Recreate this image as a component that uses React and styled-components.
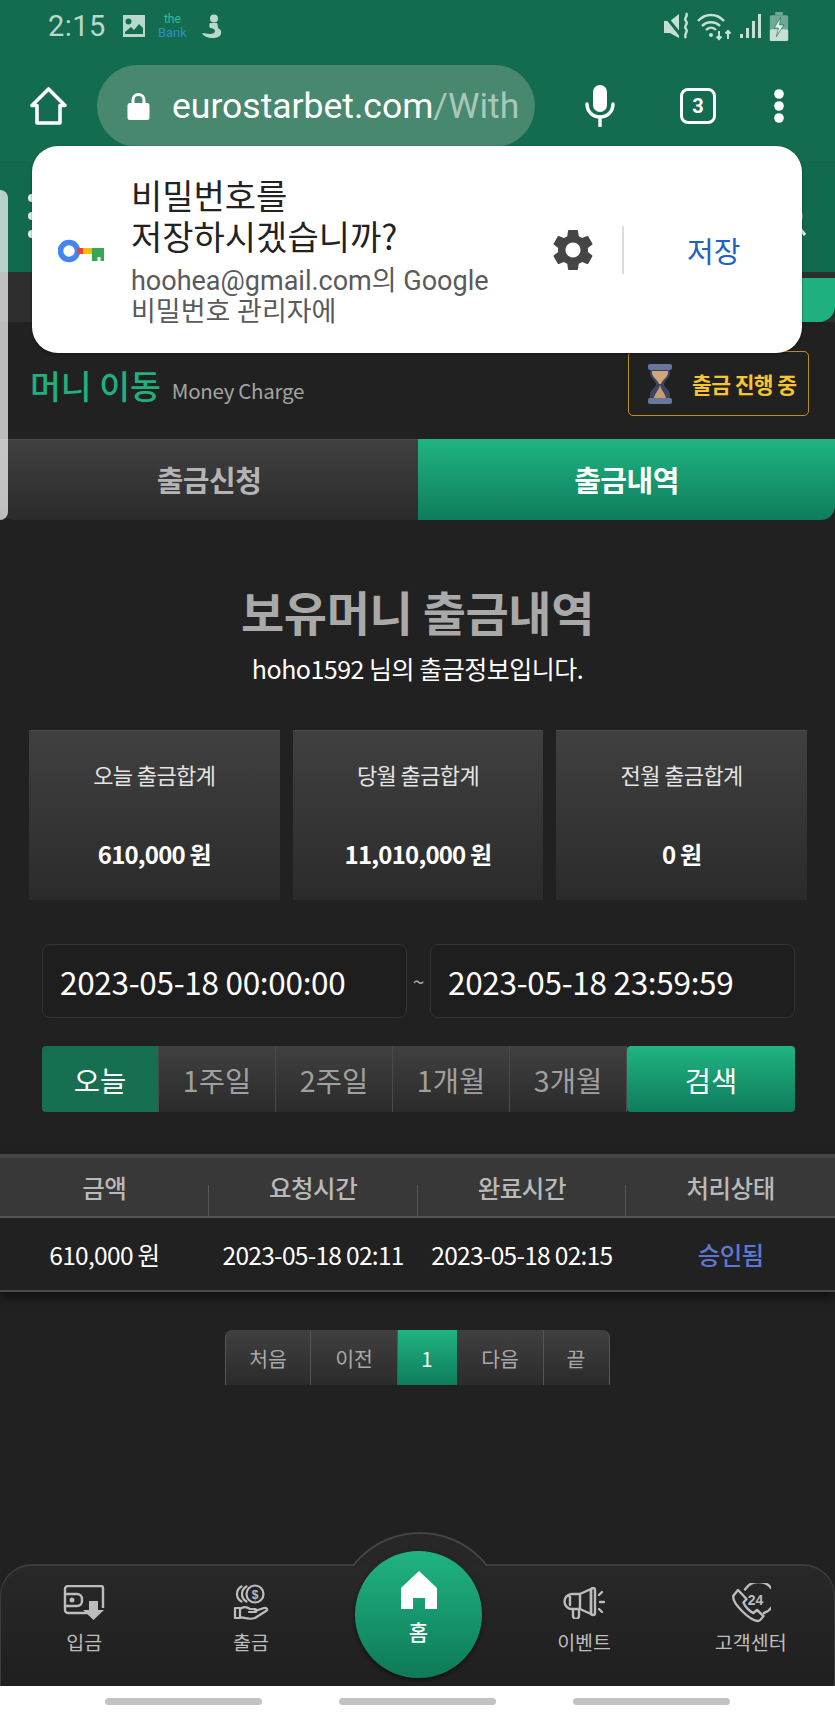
import React from "react";
import styled, { createGlobalStyle } from "styled-components";

const Global = createGlobalStyle`
  html, body { margin: 0; padding: 0; background: #212121; }
  * { box-sizing: border-box; }
`;

const KR = `"Noto Sans CJK KR", "Noto Sans", sans-serif`;
const UI = `Roboto, "Noto Sans CJK KR", sans-serif`;
const greenGrad = `linear-gradient(180deg, #20b482 0%, #0f7c5c 100%)`;
const grayGrad = `linear-gradient(180deg, #404040 0%, #2b2b2b 100%)`;

const Phone = styled.div`
  position: relative;
  width: 835px;
  height: 1717px;
  overflow: hidden;
  background: #212121;
  font-family: ${KR};
  display: flex;
  flex-direction: column;
`;

const StatusBar = styled.div`
  height: 52px;
  background: #146c50;
  padding: 0 46px 0 48px;
  display: flex;
  align-items: center;
  color: #b9d8cc;
  font-family: ${UI};
`;
const Time = styled.span`
  font-size: 29px;
  letter-spacing: 0.5px;
  margin-right: 16px;
`;
const BankMark = styled.span`
  display: flex;
  flex-direction: column;
  align-items: center;
  margin: 0 14px 0 12px;
  font-size: 13px;
  line-height: 14px;
  color: #2a8fc0;
`;
const BankThe = styled.span`
  color: #25c0a5;
  font-size: 12px;
`;
const StatusRight = styled.div`
  margin-left: auto;
  display: flex;
  align-items: center;
  gap: 7px;
`;

const Toolbar = styled.div`
  height: 111px;
  background: #146c50;
  padding: 13px 0 0 30px;
  display: flex;
  align-items: flex-start;
  border-bottom: 1px solid #126047;
`;
const HomeBtn = styled.div`
  width: 67px;
  padding-top: 22px;
`;
const UrlPill = styled.div`
  width: 438px;
  height: 82px;
  border-radius: 41px;
  background: #47886f;
  padding-left: 30px;
  display: flex;
  align-items: center;
  gap: 22px;
  font-family: ${UI};
  font-size: 35.5px;
  color: #fff;
  white-space: nowrap;
  overflow: hidden;
`;
const UrlDim = styled.span`
  color: #a6c8ba;
`;
const ToolIcons = styled.div`
  margin-left: 50px;
  display: flex;
  align-items: center;
  height: 82px;
`;
const TabCount = styled.div`
  width: 36px;
  height: 36px;
  margin: 0 57px 0 65px;
  border: 3.5px solid #fff;
  border-radius: 8px;
  color: #fff;
  font: 700 20px ${UI};
  display: flex;
  align-items: center;
  justify-content: center;
`;

const SiteHeader = styled.div`
  height: 109px;
  background: #126a4e;
  position: relative;
  padding: 31px 0 0 28px;
  display: flex;
  justify-content: space-between;
`;
const BurgerDot = styled.div`
  width: 8px;
  display: flex;
  flex-direction: column;
  gap: 10px;
  & > i {
    display: block;
    width: 8px;
    height: 8px;
    border-radius: 50%;
    background: #e8f0ec;
  }
`;
const SearchWrap = styled.div`
  margin-top: 8px;
  padding-right: 28px;
`;

const NoticeBand = styled.div`
  height: 50px;
  background: #2e2e2e;
  display: flex;
  justify-content: flex-end;
  padding-top: 6px;
`;
const NoticeTab = styled.div`
  width: 200px;
  height: 44px;
  background: #1fb07f;
  border-bottom-right-radius: 16px;
`;

const TitleRow = styled.div`
  height: 117px;
  padding: 29px 26px 0 30px;
  display: flex;
  justify-content: space-between;
  align-items: flex-start;
`;
const TitleGroup = styled.div`
  display: flex;
  align-items: baseline;
  gap: 11px;
  padding-top: 11px;
`;
const TitleMain = styled.span`
  font-size: 33.5px;
  font-weight: 500;
  line-height: 46px;
  color: #20b07f;
`;
const TitleSub = styled.span`
  font-size: 20.5px;
  color: #a4a4a4;
  letter-spacing: -0.3px;
`;
const ProgressBadge = styled.div`
  width: 181px;
  height: 65px;
  border: 1px solid #b98f22;
  border-radius: 5px;
  display: flex;
  align-items: center;
  padding-left: 17px;
  gap: 18px;
  color: #f6c52f;
  font-size: 21.5px;
  font-weight: 700;
  letter-spacing: -0.6px;
  white-space: nowrap;
`;

const Tabs = styled.div`
  height: 81px;
  display: grid;
  grid-template-columns: 418px 417px;
`;
const Tab = styled.div`
  display: flex;
  align-items: center;
  justify-content: center;
  font-size: 29px;
  font-weight: 700;
  letter-spacing: -0.5px;
  padding-bottom: 2px;
  color: ${(p) => (p.$active ? "#fff" : "#b4b4b4")};
  background: ${(p) => (p.$active ? greenGrad : grayGrad)};
  border-top: 1px solid ${(p) => (p.$active ? "#22b584" : "#4c4c4c")};
  border-bottom-right-radius: ${(p) => (p.$active ? "14px" : "0")};
  border-bottom-left-radius: ${(p) => (p.$active ? "0" : "14px")};
`;

const Heading = styled.h1`
  margin: 57px 0 0;
  height: 68px;
  line-height: 68px;
  text-align: center;
  font-size: 47px;
  font-weight: 700;
  color: #a9a9a9;
  letter-spacing: -0.4px;
`;
const SubHeading = styled.p`
  margin: 6px 0 0;
  height: 34px;
  line-height: 34px;
  text-align: center;
  font-size: 25px;
  color: #fff;
  letter-spacing: -0.5px;
`;

const Cards = styled.div`
  margin: 45px 28px 0 29px;
  display: grid;
  grid-template-columns: repeat(3, 1fr);
  gap: 13px;
`;
const Card = styled.div`
  height: 170px;
  background: ${grayGrad};
  border-top: 1px solid #4a4a4a;
  display: flex;
  flex-direction: column;
  align-items: center;
  padding-top: 27px;
`;
const CardLabel = styled.div`
  font-size: 22px;
  line-height: 32px;
  color: #e4e4e4;
  letter-spacing: -0.6px;
`;
const CardValue = styled.div`
  margin-top: 46px;
  font-size: 24px;
  line-height: 36px;
  font-weight: 700;
  color: #fff;
  letter-spacing: -0.8px;
`;

const DateRow = styled.div`
  margin: 44px 40px 0 42px;
  display: grid;
  grid-template-columns: 365px 1fr 365px;
  align-items: center;
`;
const DateInput = styled.div`
  height: 74px;
  border: 1px solid #333;
  border-radius: 8px;
  background: #1e1e1e;
  padding-left: 17px;
  display: flex;
  align-items: center;
  font-size: 31.5px;
  color: #fff;
  letter-spacing: -0.3px;
`;
const Tilde = styled.span`
  text-align: center;
  color: #aaa;
  font-size: 21px;
`;

const RangeRow = styled.div`
  margin: 28px 40px 0 42px;
  height: 66px;
  display: grid;
  grid-template-columns: repeat(5, 117px) 1fr;
`;
const RangeBtn = styled.div`
  display: flex;
  align-items: center;
  justify-content: center;
  font-size: 28.5px;
  color: ${(p) => (p.$active ? "#fff" : "#a0a0a0")};
  background: ${(p) => (p.$active ? "#156f50" : grayGrad)};
  border-right: 1px solid #4a4a4a;
  border-radius: ${(p) => (p.$active ? "4px 0 0 4px" : "0")};
`;
const SearchBtn = styled.div`
  display: flex;
  align-items: center;
  justify-content: center;
  font-size: 28.5px;
  color: #fff;
  background: ${greenGrad};
  border-radius: 4px;
`;

const TableWrap = styled.div`
  margin-top: 42px;
  box-shadow: 0 5px 10px rgba(0, 0, 0, 0.55);
  border-bottom: 2px solid #4a4a4a;
`;
const HeadRow = styled.div`
  height: 64px;
  display: grid;
  grid-template-columns: repeat(4, 1fr);
  background: #383838;
  border-top: 4px solid #474747;
  border-bottom: 2px solid #555;
`;
const HeadCell = styled.div`
  position: relative;
  text-align: center;
  font-size: 24.5px;
  font-weight: 500;
  line-height: 60px;
  color: #b9b9b9;
  letter-spacing: -0.5px;
  &:not(:last-child)::after {
    content: "";
    position: absolute;
    right: 0;
    bottom: 0;
    width: 1px;
    height: 33px;
    background: #575757;
  }
`;
const BodyRow = styled.div`
  height: 72px;
  display: grid;
  grid-template-columns: repeat(4, 1fr);
  align-items: center;
`;
const BodyCell = styled.div`
  text-align: center;
  font-size: 24.5px;
  font-weight: ${(p) => (p.$status ? 500 : 400)};
  color: ${(p) => (p.$status ? "#5e78d0" : "#fff")};
  letter-spacing: -0.7px;
  white-space: nowrap;
`;

const Pager = styled.div`
  margin: 38px auto 0;
  width: 385px;
  height: 55px;
  display: flex;
  border-radius: 8px 8px 0 0;
  overflow: hidden;
  background: ${grayGrad};
  border-left: 1px solid #555;
  border-right: 1px solid #555;
`;
const PageItem = styled.div`
  width: ${(p) => p.$w}px;
  display: flex;
  align-items: center;
  justify-content: center;
  font-size: 20.5px;
  color: ${(p) => (p.$active ? "#fff" : "#a8a8a8")};
  background: ${(p) => (p.$active ? greenGrad : "transparent")};
  border-right: 1px solid ${(p) => (p.$last || p.$active ? "transparent" : "#555")};
`;

const NavBar = styled.div`
  position: absolute;
  left: 0;
  right: 0;
  bottom: 31px;
  height: 122px;
  display: grid;
  grid-template-columns: repeat(5, 1fr);
  background: linear-gradient(180deg, #282828 0%, #1f1f1f 100%);
  border-top: 2px solid #3c3c3c;
  border-left: 1px solid #3c3c3c;
  border-right: 1px solid #3c3c3c;
  border-radius: 32px 32px 0 0;
`;
const Dome = styled.div`
  position: absolute;
  top: -34px;
  left: 333px;
  width: 168px;
  height: 34px;
  overflow: hidden;
  &::before {
    content: "";
    display: block;
    width: 168px;
    height: 168px;
    border-radius: 50%;
    border: 2px solid #444;
    background: #272727;
  }
`;
const NavItem = styled.div`
  display: flex;
  flex-direction: column;
  align-items: center;
  padding-top: 16px;
  color: #bdbdbd;
  font-size: 19.5px;
`;
const NavIconBox = styled.div`
  height: 42px;
  display: flex;
  align-items: center;
  justify-content: center;
`;
const NavLabel = styled.div`
  margin-top: 4px;
  line-height: 28px;
`;
const HomeCircle = styled.div`
  position: absolute;
  top: -15px;
  left: 354px;
  width: 127px;
  height: 127px;
  border-radius: 50%;
  background: linear-gradient(180deg, #20b482 0%, #0e7a58 100%);
  box-shadow: 0 2px 4px rgba(0, 0, 0, 0.5);
  display: flex;
  flex-direction: column;
  align-items: center;
  padding-top: 20px;
  color: #fff;
  font-size: 21px;
  font-weight: 500;
`;
const HomeLabel = styled.div`
  margin-top: 7px;
  line-height: 30px;
`;

const SystemBar = styled.div`
  position: absolute;
  left: 0;
  right: 0;
  bottom: 0;
  height: 31px;
  background: #fff;
  display: flex;
  justify-content: center;
  gap: 77px;
  padding-top: 12px;
`;
const SystemPill = styled.div`
  width: 157px;
  height: 7px;
  border-radius: 4px;
  background: #c2c2c2;
`;

const Drawer = styled.div`
  position: absolute;
  left: 0;
  top: 190px;
  width: 8px;
  height: 330px;
  background: rgba(255, 255, 255, 0.7);
  border-radius: 0 8px 8px 0;
`;

const Dialog = styled.div`
  position: absolute;
  left: 32px;
  top: 146px;
  width: 770px;
  height: 207px;
  background: #fff;
  border-radius: 26px;
  box-shadow: 0 1px 3px rgba(0, 0, 0, 0.4);
  display: flex;
  align-items: center;
  padding-left: 26px;
`;
const KeyBox = styled.div`
  width: 73px;
  flex-shrink: 0;
  padding-top: 8px;
`;
const DialogText = styled.div`
  width: 396px;
  flex-shrink: 0;
  padding-top: 3px;
`;
const DialogTitle = styled.div`
  font-size: 34px;
  line-height: 41px;
  color: #222;
`;
const DialogSub = styled.div`
  margin-top: 10px;
  font: 400 27px/31px ${UI};
  color: #5a5a5a;
  white-space: nowrap;
`;
const GearBox = styled.div`
  margin-left: 21px;
  width: 50px;
  display: flex;
`;
const Divider = styled.div`
  width: 2px;
  height: 48px;
  margin-left: 24px;
  background: #dcdcdc;
`;
const SaveBtn = styled.div`
  margin-left: 63px;
  font-size: 29px;
  color: #1b63c6;
  white-space: nowrap;
`;

const ImageIcon = () => (
  <svg width="24" height="24" viewBox="0 0 24 24">
    <path fill="#b9d8cc" fillRule="evenodd" d="M1 1h22v22H1zM6.500 4.500a3 3 0 1 0 0 6 3 3 0 0 0 0-6zM3 20h18v-6l-4-4-5 6-3-3-6 5z" />
  </svg>
);
const MotherIcon = () => (
  <svg width="22" height="25" viewBox="0 0 22 25" fill="#b9d8cc">
    <circle cx="13" cy="4.500" r="4" />
    <path d="M9 9h7c1 2 1 4 1 5 2 1 4 3 3 6-1 3-5 4-8 4-5 0-10-2-11-5 3 0 5 1 8 1 3 0 5-1 5-3 0-2-3-3-5-3-1-2-1-3 0-5z" />
  </svg>
);
const MuteIcon = () => (
  <svg width="28" height="28" viewBox="0 0 28 28" fill="#c6e0d5">
    <path d="M2 9h6l9-7v24l-9-5H2z" />
    <path d="M1 1l20 25" stroke="#146c50" strokeWidth="3" />
    <path d="M24 1c3 3-3 5 0 8s-3 5 0 8-3 5 0 9" fill="none" stroke="#c6e0d5" strokeWidth="2.400" />
  </svg>
);
const WifiIcon = () => (
  <svg width="36" height="30" viewBox="0 0 36 30" fill="none" stroke="#c6e0d5" strokeWidth="2.400">
    <path d="M1 10c7-8 19-8 26 0M5 15c5-5 13-5 18 0M9 19c3-3 7-3 10 0" />
    <circle cx="14" cy="24" r="2" fill="#c6e0d5" stroke="none" />
    <path d="M22 20v8M19.500 25.500L22 28l2.500-2.500M31 28v-8M28.500 22.500L31 20l2.500 2.500" strokeWidth="2" />
  </svg>
);
const SignalIcon = () => (
  <svg width="22" height="26" viewBox="0 0 22 26" fill="#c6e0d5">
    <rect x="0" y="21" width="3" height="4" />
    <rect x="6" y="15" width="3" height="10" />
    <rect x="12" y="8" width="3" height="17" />
    <rect x="18" y="1" width="3" height="24" />
  </svg>
);
const BatteryIcon = () => (
  <svg width="20" height="29" viewBox="0 0 17 27">
    <rect x="5" y="0" width="7" height="3" fill="#6fa894" />
    <rect x="0" y="3" width="17" height="24" rx="1.500" fill="#6fa894" />
    <rect x="0" y="16" width="17" height="11" rx="1.500" fill="#c6e0d5" />
    <path d="M10 5L4 15h4l-2 8 7-11H9z" fill="#e0efe9" stroke="#146c50" strokeWidth="0.600" />
  </svg>
);
const HomeOutline = () => (
  <svg width="37" height="38" viewBox="0 0 37 38" fill="none" stroke="#fff" strokeWidth="3.600" strokeLinejoin="round">
    <path d="M18.500 2L2 18.500h5V36h23V18.500h5z" />
  </svg>
);
const LockIcon = () => (
  <svg width="23" height="28" viewBox="0 0 23 28" style={{ flexShrink: 0 }}>
    <path fill="none" stroke="#fff" strokeWidth="3" d="M6 12V8a5.500 5.500 0 0 1 11 0v4" />
    <rect x="0.500" y="11" width="22" height="17" rx="2.500" fill="#fff" />
  </svg>
);
const MicIcon = () => (
  <svg width="30" height="42" viewBox="0 0 30 42">
    <rect x="8" y="0" width="14" height="27" rx="7" fill="#fff" />
    <path d="M2 19c0 8 6 13 13 13s13-5 13-13M15 32v9" fill="none" stroke="#fff" strokeWidth="3.400" strokeLinecap="round" />
  </svg>
);
const MenuDots = () => (
  <svg width="12" height="36" viewBox="0 0 12 36" fill="#fff">
    <circle cx="6" cy="6" r="4.800" />
    <circle cx="6" cy="18" r="4.800" />
    <circle cx="6" cy="30" r="4.800" />
  </svg>
);
const SearchIcon = () => (
  <svg width="32" height="36" viewBox="0 0 32 36" fill="none" stroke="#dfeee8" strokeWidth="3">
    <circle cx="14" cy="14" r="12" />
    <path d="M22 23l8 10" />
  </svg>
);
const KeyIcon = () => (
  <svg width="46" height="24" viewBox="0 0 46 24">
    <circle cx="11" cy="12" r="8.500" fill="none" stroke="#4285f4" strokeWidth="5.500" />
    <rect x="19" y="9" width="6" height="6" fill="#ea4335" />
    <rect x="25" y="9" width="9" height="6" fill="#fbbc05" />
    <path d="M34 9h12v13h-3.500v-4h-3v4H34z" fill="#34a853" />
  </svg>
);
const GearIcon = () => (
  <svg width="50" height="50" viewBox="0 0 24 24" fill="#454545">
    <path d="M19.140 12.940c.04-.3.06-.61.06-.94 0-.32-.02-.64-.07-.94l2.030-1.580c.18-.14.23-.41.12-.61l-1.920-3.320c-.12-.22-.37-.29-.59-.22l-2.390.96c-.5-.38-1.030-.7-1.620-.94l-.36-2.540c-.04-.24-.24-.41-.48-.41h-3.840c-.24 0-.43.17-.47.41l-.36 2.540c-.59.24-1.130.57-1.620.94l-2.390-.96c-.22-.08-.47 0-.59.22L2.740 8.870c-.12.21-.08.47.12.61l2.030 1.580c-.05.3-.09.63-.09.94s.02.64.07.94l-2.030 1.580c-.18.14-.23.41-.12.61l1.920 3.320c.12.22.37.29.59.22l2.390-.96c.5.38 1.030.7 1.620.94l.36 2.540c.05.24.24.41.48.41h3.840c.24 0 .44-.17.47-.41l.36-2.540c.59-.24 1.130-.56 1.620-.94l2.390.96c.22.08.47 0 .59-.22l1.920-3.320c.12-.22.07-.47-.12-.61l-2.010-1.580zM12 15.600c-1.980 0-3.600-1.620-3.600-3.600s1.620-3.600 3.600-3.600 3.600 1.620 3.600 3.600-1.620 3.600-3.600 3.600z" />
  </svg>
);
const Hourglass = () => (
  <svg width="28" height="42" viewBox="0 0 28 42">
    <path d="M4 4h20v6c0 5-6 8-6 11s6 6 6 11v6H4v-6c0-5 6-8 6-11s-6-6-6-11z" fill="#3c4560" />
    <path d="M6 8h16v2c0 4-6 7-7 11h-2c-1-4-7-7-7-11z" fill="#d0a67c" />
    <path d="M14 22c1 5 5 8 6 13H8c1-5 5-8 6-13z" fill="#c79c72" />
    <rect x="2" y="1" width="24" height="6" rx="2" fill="#68769c" />
    <rect x="2" y="35" width="24" height="6" rx="2" fill="#68769c" />
  </svg>
);
const WalletIcon = () => (
  <svg width="42" height="36" viewBox="0 0 42 36" fill="none" stroke="#bdbdbd" strokeWidth="2.400" strokeLinejoin="round">
    <path d="M25 28H5a3 3 0 0 1-3-3V4a3 3 0 0 1 3-3h33a2 2 0 0 1 2 2v20" />
    <path d="M2 9h12a5 5 0 0 1 5 5v2a5 5 0 0 1-5 5H2" />
    <circle cx="9" cy="15" r="2.500" fill="#bdbdbd" stroke="none" />
    <path d="M26 16h9v9h6L30.500 35 20 25h6z" fill="#bdbdbd" stroke="none" />
  </svg>
);
const CoinHandIcon = () => (
  <svg width="36" height="38" viewBox="0 0 36 38" fill="none" stroke="#bdbdbd" strokeWidth="2.200" strokeLinecap="round" strokeLinejoin="round">
    <circle cx="22" cy="10" r="8.500" />
    <path d="M13.500 2.500a8.500 8.500 0 0 0 0 15M8.500 2.500a8.500 8.500 0 0 0 0 15" />
    <text x="22" y="14.500" fontSize="12" fontWeight="700" textAnchor="middle" fill="#bdbdbd" stroke="none" fontFamily="Liberation Sans, sans-serif">$</text>
    <path d="M2 24h5v10H2zM7 25c4-3 7-2 10 0h5c2 0 2 3 0 3h-6M22 27l9-3c3-1 4 2 2 3l-11 7c-5 2-10 0-15-1" />
  </svg>
);
const MegaphoneIcon = () => (
  <svg width="42" height="32" viewBox="0 0 42 32" fill="none" stroke="#bdbdbd" strokeWidth="2.400" strokeLinecap="round" strokeLinejoin="round">
    <path d="M9 7h8l11-5v25l-11-5H9a6 6 0 0 1 0-15zM17 7v15M7 10v8" />
    <path d="M10 22v7a2.500 2.500 0 0 0 6 0v-7" />
    <rect x="28" y="1" width="4" height="27" rx="2" />
    <path d="M36 8l3-3M37 15h4M36 22l3 3" />
  </svg>
);
const PhoneIcon = () => (
  <svg width="40" height="40" viewBox="0 0 40 40" fill="none" stroke="#bdbdbd" strokeWidth="2.400" strokeLinejoin="round">
    <path d="M7 7L2.500 12.500c-1 3 2 9 8.500 15.500s12 10 16 10c2 0 4-3 5.500-5l-6.500-6-3.500 3c-3-1-9-6.500-10-10.500l3-3.500z" />
    <path d="M14 6.500A16 16 0 1 1 33 30" strokeLinecap="round" />
    <text x="24.500" y="22" fontSize="14" fontWeight="700" textAnchor="middle" fill="#bdbdbd" stroke="none" fontFamily="Liberation Sans, sans-serif">24</text>
  </svg>
);
const HomeSolid = () => (
  <svg width="36" height="38" viewBox="0 0 36 38" fill="#fff">
    <path d="M18 0L36 17v21H24V27H12v11H0V17z" />
  </svg>
);

const summary = [
  ["오늘 출금합계", "610,000 원"],
  ["당월 출금합계", "11,010,000 원"],
  ["전월 출금합계", "0 원"],
];
const ranges = ["1주일", "2주일", "1개월", "3개월"];
const heads = ["금액", "요청시간", "완료시간", "처리상태"];
const pages = [
  { t: "처음", w: 85 },
  { t: "이전", w: 87 },
  { t: "1", w: 59, active: true },
  { t: "다음", w: 87 },
  { t: "끝", w: 65, last: true },
];

export default function App() {
  return (
    <Phone>
      <Global />
      <StatusBar>
        <Time>2:15</Time>
        <ImageIcon />
        <BankMark>
          <BankThe>the</BankThe>
          Bank
        </BankMark>
        <MotherIcon />
        <StatusRight>
          <MuteIcon />
          <WifiIcon />
          <SignalIcon />
          <BatteryIcon />
        </StatusRight>
      </StatusBar>
      <Toolbar>
        <HomeBtn>
          <HomeOutline />
        </HomeBtn>
        <UrlPill>
          <LockIcon />
          <span>
            eurostarbet.com<UrlDim>/With</UrlDim>
          </span>
        </UrlPill>
        <ToolIcons>
          <MicIcon />
          <TabCount>3</TabCount>
          <MenuDots />
        </ToolIcons>
      </Toolbar>
      <SiteHeader>
        <BurgerDot>
          <i />
          <i />
          <i />
        </BurgerDot>
        <SearchWrap>
          <SearchIcon />
        </SearchWrap>
      </SiteHeader>
      <NoticeBand>
        <NoticeTab />
      </NoticeBand>
      <TitleRow>
        <TitleGroup>
          <TitleMain>머니 이동</TitleMain>
          <TitleSub>Money Charge</TitleSub>
        </TitleGroup>
        <ProgressBadge>
          <Hourglass />
          출금 진행 중
        </ProgressBadge>
      </TitleRow>
      <Tabs>
        <Tab>출금신청</Tab>
        <Tab $active>출금내역</Tab>
      </Tabs>
      <Heading>보유머니 출금내역</Heading>
      <SubHeading>hoho1592 님의 출금정보입니다.</SubHeading>
      <Cards>
        {summary.map(([label, value]) => (
          <Card key={label}>
            <CardLabel>{label}</CardLabel>
            <CardValue>{value}</CardValue>
          </Card>
        ))}
      </Cards>
      <DateRow>
        <DateInput>2023-05-18 00:00:00</DateInput>
        <Tilde>~</Tilde>
        <DateInput>2023-05-18 23:59:59</DateInput>
      </DateRow>
      <RangeRow>
        <RangeBtn $active>오늘</RangeBtn>
        {ranges.map((r) => (
          <RangeBtn key={r}>{r}</RangeBtn>
        ))}
        <SearchBtn>검색</SearchBtn>
      </RangeRow>
      <TableWrap>
        <HeadRow>
          {heads.map((h) => (
            <HeadCell key={h}>{h}</HeadCell>
          ))}
        </HeadRow>
        <BodyRow>
          <BodyCell>610,000 원</BodyCell>
          <BodyCell>2023-05-18 02:11</BodyCell>
          <BodyCell>2023-05-18 02:15</BodyCell>
          <BodyCell $status>승인됨</BodyCell>
        </BodyRow>
      </TableWrap>
      <Pager>
        {pages.map((p) => (
          <PageItem key={p.t} $w={p.w} $active={p.active} $last={p.last}>
            {p.t}
          </PageItem>
        ))}
      </Pager>
      <NavBar>
        <Dome />
        <NavItem>
          <NavIconBox>
            <WalletIcon />
          </NavIconBox>
          <NavLabel>입금</NavLabel>
        </NavItem>
        <NavItem>
          <NavIconBox>
            <CoinHandIcon />
          </NavIconBox>
          <NavLabel>출금</NavLabel>
        </NavItem>
        <div />
        <NavItem>
          <NavIconBox>
            <MegaphoneIcon />
          </NavIconBox>
          <NavLabel>이벤트</NavLabel>
        </NavItem>
        <NavItem>
          <NavIconBox>
            <PhoneIcon />
          </NavIconBox>
          <NavLabel>고객센터</NavLabel>
        </NavItem>
        <HomeCircle>
          <HomeSolid />
          <HomeLabel>홈</HomeLabel>
        </HomeCircle>
      </NavBar>
      <SystemBar>
        <SystemPill />
        <SystemPill />
        <SystemPill />
      </SystemBar>
      <Drawer />
      <Dialog>
        <KeyBox>
          <KeyIcon />
        </KeyBox>
        <DialogText>
          <DialogTitle>
            비밀번호를
            <br />
            저장하시겠습니까?
          </DialogTitle>
          <DialogSub>
            hoohea@gmail.com의 Google
            <br />
            비밀번호 관리자에
          </DialogSub>
        </DialogText>
        <GearBox>
          <GearIcon />
        </GearBox>
        <Divider />
        <SaveBtn>저장</SaveBtn>
      </Dialog>
    </Phone>
  );
}
